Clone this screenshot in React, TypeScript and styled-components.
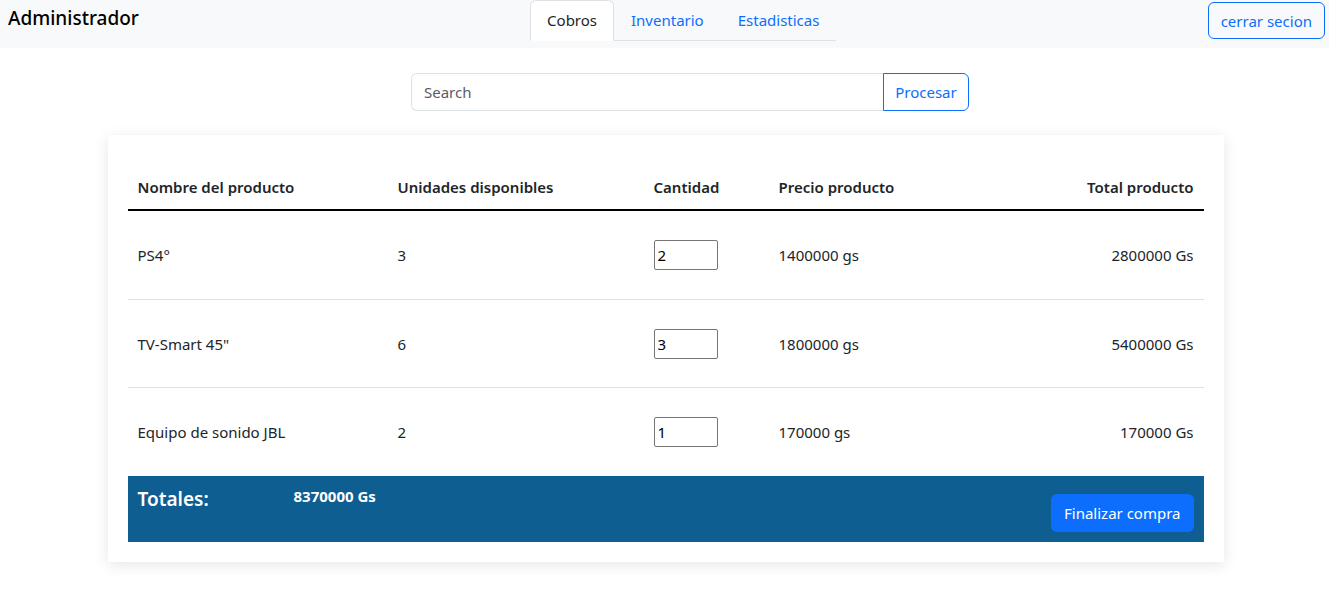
import React from 'react';
import styled, { createGlobalStyle } from 'styled-components';

const GlobalStyle = createGlobalStyle`
  body {
    margin: 0;
    background: #fff;
    font-family: "Noto Sans", "Open Sans", sans-serif;
    color: #212529;
    font-size: 15px;
  }
`;

const Header = styled.header`
  height: 48px;
  background: #f8f9fa;
  display: flex;
  justify-content: space-between;
  align-items: flex-start;
`;

const Brand = styled.div`
  padding: 5px 0 0 8px;
  font-size: 19px;
  font-weight: 500;
  line-height: 26px;
  color: #000;
`;

const Tabs = styled.nav`
  display: flex;
  margin-left: 20px;
  border-bottom: 1px solid #dee2e6;
  height: 40px;
`;

const Tab = styled.a<{ $active?: boolean }>`
  display: block;
  padding: 0 16px;
  height: 41px;
  line-height: 39px;
  box-sizing: border-box;
  font-size: 15px;
  text-decoration: none;
  color: ${({ $active }) => ($active ? '#212529' : '#0d6efd')};
  background: ${({ $active }) => ($active ? '#fff' : 'transparent')};
  border: 1px solid ${({ $active }) => ($active ? '#dee2e6' : 'transparent')};
  border-bottom-color: ${({ $active }) => ($active ? '#fff' : 'transparent')};
  border-radius: 6px 6px 0 0;
`;

const LogoutButton = styled.button`
  margin: 2px 4px 0 0;
  height: 37px;
  padding: 0 12px;
  font-family: inherit;
  font-size: 15px;
  color: #0d6efd;
  background: transparent;
  border: 1px solid #0d6efd;
  border-radius: 6px;
`;

const SearchRow = styled.div`
  display: flex;
  justify-content: center;
  padding: 25px 0 0 51px;
`;

const SearchInput = styled.input`
  width: 472px;
  height: 38px;
  box-sizing: border-box;
  padding: 0 12px;
  font-family: inherit;
  font-size: 15px;
  color: #212529;
  border: 1px solid #dee2e6;
  border-right: none;
  border-radius: 6px 0 0 6px;
  outline: none;
  &::placeholder {
    color: #595c5f;
  }
`;

const SearchButton = styled.button`
  width: 86px;
  height: 38px;
  font-family: inherit;
  font-size: 15px;
  color: #0d6efd;
  background: #fff;
  border: 1px solid #0d6efd;
  border-radius: 0 6px 6px 0;
`;

const Card = styled.section`
  width: 1076px;
  margin: 24px auto 40px;
  padding: 32px 20px 20px;
  background: #fff;
  box-shadow: 0 3px 14px rgba(0, 0, 0, 0.1);
  position: relative;
  left: 1px;
`;

const Table = styled.table`
  width: 100%;
  border-collapse: collapse;
  table-layout: fixed;
`;

const Th = styled.th<{ $right?: boolean }>`
  padding: 8px 10px 10px;
  line-height: 24px;
  font-size: 15px;
  font-weight: 600;
  text-align: ${({ $right }) => ($right ? 'right' : 'left')};
  border-bottom: 2px solid #000;
`;

const Td = styled.td<{ $right?: boolean }>`
  padding: 29px 10px 28.5px;
  height: 30px;
  line-height: 24px;
  font-size: 15px;
  text-align: ${({ $right }) => ($right ? 'right' : 'left')};
`;

const Row = styled.tr<{ $last?: boolean }>`
  & > td {
    border-bottom: ${({ $last }) => ($last ? 'none' : '1px solid #dee2e6')};
  }
`;

const QtyInput = styled.input`
  width: 64px;
  height: 30px;
  box-sizing: border-box;
  padding: 0 3px;
  font-family: inherit;
  font-size: 15px;
  color: #000;
  border: 1px solid #767676;
  border-radius: 2px;
  vertical-align: middle;
`;

const TotalsBar = styled.div`
  display: flex;
  align-items: flex-start;
  height: 66px;
  padding: 0 10px;
  background: #0f5e91;
  color: #fff;
`;

const TotalsLabel = styled.div`
  width: 156px;
  padding-top: 10px;
  font-size: 19px;
  font-weight: 600;
  line-height: 26px;
`;

const TotalsValue = styled.div`
  flex: 1;
  padding-top: 9px;
  font-size: 15px;
  font-weight: 700;
  line-height: 22px;
`;

const FinishButton = styled.button`
  margin-top: 18px;
  height: 38px;
  padding: 0 13px;
  font-family: inherit;
  font-size: 15px;
  color: #fff;
  background: #0d6efd;
  border: none;
  border-radius: 6px;
`;

const products = [
  { name: 'PS4°', stock: 3, qty: 2, price: '1400000 gs', total: '2800000 Gs' },
  { name: 'TV-Smart 45"', stock: 6, qty: 3, price: '1800000 gs', total: '5400000 Gs' },
  { name: 'Equipo de sonido JBL', stock: 2, qty: 1, price: '170000 gs', total: '170000 Gs' },
];

export default function App() {
  return (
    <>
      <GlobalStyle />
      <Header>
        <Brand>Administrador</Brand>
        <Tabs>
          <Tab $active>Cobros</Tab>
          <Tab>Inventario</Tab>
          <Tab>Estadisticas</Tab>
        </Tabs>
        <LogoutButton>cerrar secion</LogoutButton>
      </Header>
      <SearchRow>
        <SearchInput placeholder="Search" />
        <SearchButton>Procesar</SearchButton>
      </SearchRow>
      <Card>
        <Table>
          <colgroup>
            <col style={{ width: 260 }} />
            <col style={{ width: 256 }} />
            <col style={{ width: 125 }} />
            <col style={{ width: 210 }} />
            <col />
          </colgroup>
          <thead>
            <tr>
              <Th>Nombre del producto</Th>
              <Th>Unidades disponibles</Th>
              <Th>Cantidad</Th>
              <Th>Precio producto</Th>
              <Th $right>Total producto</Th>
            </tr>
          </thead>
          <tbody>
            {products.map((p, i) => (
              <Row key={p.name} $last={i === products.length - 1}>
                <Td>{p.name}</Td>
                <Td>{p.stock}</Td>
                <Td>
                  <QtyInput defaultValue={p.qty} />
                </Td>
                <Td>{p.price}</Td>
                <Td $right>{p.total}</Td>
              </Row>
            ))}
          </tbody>
        </Table>
        <TotalsBar>
          <TotalsLabel>Totales:</TotalsLabel>
          <TotalsValue>8370000 Gs</TotalsValue>
          <FinishButton>Finalizar compra</FinishButton>
        </TotalsBar>
      </Card>
    </>
  );
}
